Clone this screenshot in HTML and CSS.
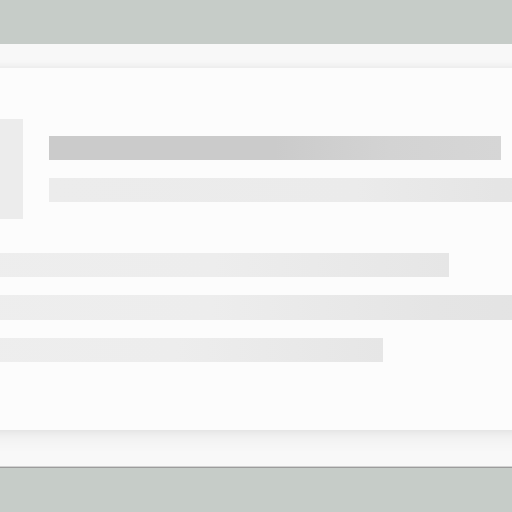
FILE: index.html
```html
<!DOCTYPE html>
<html>
<head>
<meta charset="utf-8">
<link rel="stylesheet" href="styles.css">
</head>
<body>
<div class="panel">
  <div class="card">
    <div class="head">
      <div class="avatar"></div>
      <div class="titles">
        <div class="bar bar-title"></div>
        <div class="bar bar-sub"></div>
      </div>
    </div>
    <div class="lines">
      <div class="bar line l1"></div>
      <div class="bar line l2"></div>
      <div class="bar line l3"></div>
    </div>
  </div>
</div>
</body>
</html>
```
FILE: styles.css
```css
html, body {
  margin: 0;
  padding: 0;
  width: 512px;
  height: 512px;
  overflow: hidden;
  background: #c6ccc8;
  font-family: "Liberation Sans", sans-serif;
}
.panel {
  margin-top: 44px;
  height: 423px;
  background: #f8f8f8;
  border-bottom: 1px solid #d2d2d2;
  box-shadow: 0 1px 0 #9c9c9c;
  padding-top: 24px;
  box-sizing: border-box;
}
.card {
  margin-left: -101px;
  width: 700px;
  height: 362px;
  box-sizing: border-box;
  background: #fcfcfc;
  box-shadow: 0 0 10px rgba(0,0,0,0.07), 0 8px 18px rgba(0,0,0,0.05);
  padding: 51px 0 0 24px;
}
.head {
  display: flex;
  gap: 26px;
}
.avatar {
  width: 100px;
  height: 100px;
  background: #ececec;
  flex: none;
}
.titles {
  display: flex;
  flex-direction: column;
  gap: 18px;
  padding-top: 17px;
}
.bar {
  height: 24px;
}
.bar-title {
  width: 452px;
  background: linear-gradient(90deg, #cbcbcb 0%, #cbcbcb 50%, #d3d3d3 75%, #d6d6d6 100%);
}
.bar-sub {
  width: 560px;
  background: linear-gradient(90deg, #ececec 0%, #ebebeb 55%, #e5e5e5 80%, #e6e6e6 100%);
}
.lines {
  display: flex;
  flex-direction: column;
  gap: 18px;
  margin-top: 34px;
}
.line {
  background: linear-gradient(90deg, #eeeeee 0%, #ededed 55%, #e6e6e6 100%);
}
.l1 { width: 526px; }
.l2 { width: 640px; height: 25px; background: linear-gradient(90deg, #eeeeee 0%, #ededed 45%, #e5e5e5 80%, #e3e3e3 100%); }
.l3 { width: 460px; }
```
